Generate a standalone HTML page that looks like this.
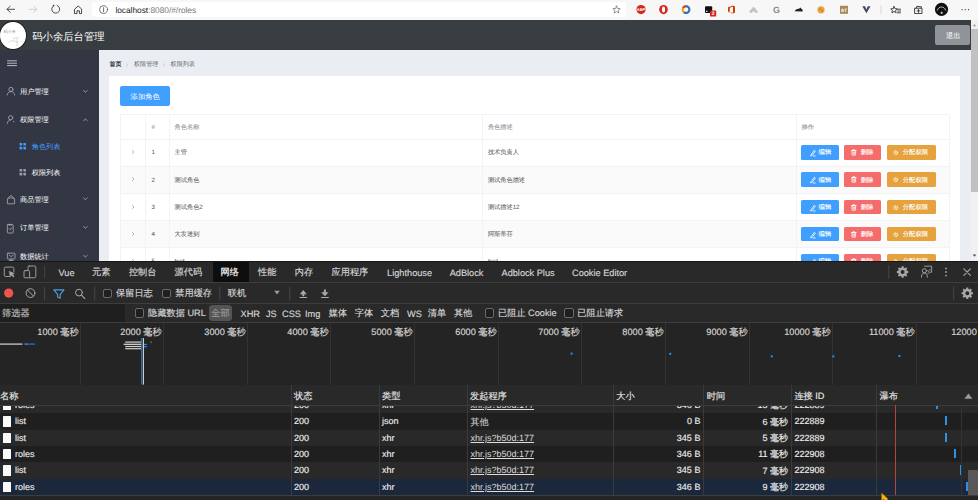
<!DOCTYPE html>
<html><head><meta charset="utf-8">
<style>
*{margin:0;padding:0;box-sizing:border-box}
html,body{width:978px;height:500px;overflow:hidden;background:#fff;font-family:"Liberation Sans",sans-serif;text-rendering:geometricPrecision}
.a{position:absolute}
.t{position:absolute;white-space:nowrap;line-height:1;transform-origin:0 0}
</style></head><body>
<div class="a" style="left:0;top:0;width:978px;height:20px;background:#f7f7f7"></div>
<div class="a" style="left:92.4px;top:2.2px;width:534px;height:15px;background:#fff;border-radius:4px 0 0 4px"></div>
<svg class="a" style="left:0;top:0" width="978" height="20" viewBox="0 0 978 20">
<g fill="none" stroke-linecap="round" stroke-linejoin="round">
  <path d="M7 9.3H14.6M10.2 6.3L7 9.3L10.2 12.3" stroke="#333" stroke-width="0.85"/>
  <path d="M29.2 9.3H36.8M33.6 6.3L36.8 9.3L33.6 12.3" stroke="#c8c8c8" stroke-width="0.85"/>
  <path d="M53.8 5.6A4 4 0 1 0 57.2 5.4" stroke="#333" stroke-width="0.85"/>
  <circle cx="53.6" cy="5.6" r="0.8" fill="#333" stroke="none"/>
  <path d="M74.8 9L78.2 6L81.6 9V13.6H79.4V10.8H77V13.6H74.8Z" stroke="#333" stroke-width="0.9"/>
  <circle cx="103.6" cy="9.6" r="4" stroke="#555" stroke-width="0.8"/>
  <path d="M103.6 8.6V11.8" stroke="#555" stroke-width="0.9"/>
  <path d="M616.5 6L617.6 8.5L620.2 8.7L618.2 10.4L618.8 13L616.5 11.6L614.2 13L614.8 10.4L612.8 8.7L615.4 8.5Z" stroke="#666" stroke-width="0.7"/>
  <line x1="881" y1="5.5" x2="881" y2="13.8" stroke="#d0d0d0" stroke-width="0.8"/>
  <path d="M894 6.5L895 8.7L897.3 8.9L895.6 10.4L896.1 12.7L894 11.5L891.9 12.7L892.4 10.4L890.7 8.9L893 8.7Z" stroke="#333" stroke-width="0.9"/>
  <path d="M897.5 9.2H900.5M897.8 11H900.5M897.3 12.8H900.5" stroke="#333" stroke-width="0.9"/>
  <path d="M915 8.2H922V13.5H915Z M916.2 8.2L916.8 6.3L921.5 6.8L921.2 8.2 M918.5 9.5V12.3M917.1 10.9H919.9" stroke="#333" stroke-width="0.9"/>
</g>
<circle cx="103.6" cy="7.3" r="0.5" fill="#555"/>
<circle cx="641" cy="9.6" r="4.6" fill="#d4271c"/>
<text x="641" y="11.2" font-size="4" fill="#fff" text-anchor="middle" font-family="Liberation Sans" font-weight="bold">ABP</text>
<ellipse cx="663.5" cy="9.6" rx="4.3" ry="4.6" fill="#d4271c"/>
<ellipse cx="663.5" cy="9.6" rx="1.6" ry="3" fill="#fff"/>
<circle cx="686" cy="9.6" r="3.4" fill="none" stroke="#e8a317" stroke-width="2"/>
<path d="M686 6.2A3.4 3.4 0 0 1 689.4 9.6" fill="none" stroke="#2a6fcf" stroke-width="2"/>
<path d="M689.4 9.6A3.4 3.4 0 0 1 684 12.4" fill="none" stroke="#2a6fcf" stroke-width="2"/>
<path d="M683 8A3.4 3.4 0 0 1 686 6.2" fill="none" stroke="#d9382c" stroke-width="2"/>
<rect x="705" y="6.2" width="7.2" height="6.8" rx="1" fill="#111"/>
<circle cx="706.8" cy="11.2" r="0.8" fill="#fff"/>
<rect x="710" y="10.6" width="6.2" height="5.8" rx="0.6" fill="#d8251d"/>
<text x="713.1" y="15.3" font-size="5" fill="#fff" text-anchor="middle" font-family="Liberation Sans" font-weight="bold">2</text>
<path d="M728 7.2L733 5.6L735 6.6V12.6L733 13.6L728 12.2L733 12.8V6.6L729.8 7.8V11.3L728 12.2Z" fill="#d83b01"/>
<path d="M749.4 11.6L752.6 7.4Q753.6 6.4 754.6 7.4L757.8 11.6Q758.2 12.6 757 12.8L755.2 12.8L753.6 10.8L752 12.8L750.2 12.8Q749 12.6 749.4 11.6Z" fill="#c2c2c2"/>
<text x="776.4" y="12.8" font-size="9" fill="#8a8a8a" text-anchor="middle" font-family="Liberation Sans" font-weight="bold">G</text>
<path d="M794.6 11.2C795.5 9.5 797 8.6 799 8.8L800.6 7.4L801.3 8.7C802.5 9.2 803 10.2 802.6 11.6Z" fill="#222"/>
<circle cx="821" cy="9.8" r="3.6" fill="#e8a33a"/>
<circle cx="820" cy="9" r="0.6" fill="#7a3d14"/><circle cx="822.2" cy="10.6" r="0.7" fill="#c0392b"/>
<rect x="840" y="5.8" width="8" height="8" fill="#a8875a"/>
<text x="844" y="12" font-size="4.6" fill="#fff" text-anchor="middle" font-family="Liberation Sans" font-weight="bold">ST</text>
<path d="M862.3 6.3H865L866.4 9.6L867.8 6.3H870.5L866.4 13.2Z" fill="#3e4a5a"/>
<circle cx="941.5" cy="9.4" r="6.6" fill="#111"/>
<path d="M937.2 10.5C938 8 939.8 7 941.5 7C943.2 7 945 8 945.8 10.5" fill="none" stroke="#fff" stroke-width="0.7"/>
<circle cx="941.7" cy="12.8" r="1.1" fill="#ccc"/>
<circle cx="962" cy="9.7" r="0.6" fill="#333"/><circle cx="965.3" cy="9.7" r="0.6" fill="#333"/><circle cx="968.6" cy="9.7" r="0.6" fill="#333"/>
</svg>
<div class="t" style="left:115.40px;top:6.00px;font-size:8.3px;color:#222;">localhost<span style="color:#777">:8080/#/roles</span></div>
<div class="a" style="left:0;top:20px;width:971px;height:30.4px;background:#373d41"></div>
<div class="a" style="left:-1px;top:20.6px;width:28px;height:29.6px;border-radius:50%;background:#fff;border:1.2px solid #1a1a1a"></div>
<div class="t" style="left:3.40px;top:30.00px;font-size:4.2px;color:#999;">码小余</div>
<svg class="a" style="left:0;top:20px" width="30" height="30"><path d="M8.5 22.5C11 20 15.5 20.5 18.5 23M13 18.5L19 17.5M17 19V26" fill="none" stroke="#c8c8c8" stroke-width="0.7"/></svg>
<div class="t" style="left:32.20px;top:33.00px;font-size:10.35px;color:#fff;">码小余后台管理</div>
<div class="a" style="left:935px;top:25px;width:35.4px;height:20.2px;background:#909399;border-radius:2px"></div>
<div class="t" style="left:946.00px;top:32.00px;font-size:7.25px;color:#fff;">退出</div>
<div class="a" style="left:0;top:50.4px;width:99px;height:211px;background:#333744"></div>
<svg class="a" style="left:0;top:50px" width="99" height="211" viewBox="0 0 99 211">
<g fill="none" stroke="#c8cbd2" stroke-width="0.9" stroke-linecap="round">
  <path d="M7.5 10.8H16.5M7.5 13.2H16.5M7.5 15.6H16.5"/>
</g>
<g fill="none" stroke="#a9adb5" stroke-width="0.8" stroke-linecap="round" stroke-linejoin="round">
  <circle cx="11" cy="39.4" r="2.1"/>
  <path d="M7.3 45C7.6 42.6 9 41.6 11 41.6C13 41.6 14.4 42.6 14.7 45"/>
  <circle cx="10.6" cy="67.8" r="2.1"/>
  <path d="M7.3 73.4C7.6 71 9 70 10.6 70M13.2 71.2L14.2 72.2"/>
  <path d="M83.6 40.6L85.4 42.2L87.2 40.6"/>
  <path d="M83.6 70.6L85.4 69L87.2 70.6"/>
  <path d="M83.6 148L85.4 149.6L87.2 148"/>
  <path d="M83.6 176.6L85.4 178.2L87.2 176.6"/>
  <path d="M83.6 205.4L85.4 207L87.2 205.4"/>
  <path d="M7.4 153.4V148.6L11 145.4L14.6 148.6V153.4Z"/><path d="M8.6 148.4Q11 146.6 13.4 148.4"/>
  <rect x="7.4" y="174.6" width="5.8" height="8.4" rx="0.6"/>
  <path d="M9.4 174.2V175.4M11.2 174.2V175.4M9 178.6L10.2 179.8L11.8 177.6"/>
  <rect x="7.4" y="203.2" width="7.6" height="5.8" rx="0.6"/>
  <path d="M9.2 210.6H13.2M11.2 209V210.6M9.2 205.2L11.2 206.6L13.2 205.2"/>
</g>
<g fill="#409eff">
  <rect x="19.6" y="93" width="2.6" height="2.6" rx="0.4"/><rect x="23.4" y="93" width="2.6" height="2.6" rx="0.4"/>
  <rect x="19.6" y="96.8" width="2.6" height="2.6" rx="0.4"/><rect x="23.4" y="96.8" width="2.6" height="2.6" rx="0.4"/>
</g>
<g fill="#9a9ea7">
  <rect x="19.6" y="119" width="2.6" height="2.6" rx="0.4"/><rect x="23.4" y="119" width="2.6" height="2.6" rx="0.4"/>
  <rect x="19.6" y="122.8" width="2.6" height="2.6" rx="0.4"/><rect x="23.4" y="122.8" width="2.6" height="2.6" rx="0.4"/>
</g>
</svg>
<div class="t" style="left:20.00px;top:88.00px;font-size:7.2px;color:#fff;">用户管理</div>
<div class="t" style="left:20.00px;top:116.00px;font-size:7.2px;color:#fff;">权限管理</div>
<div class="t" style="left:31.70px;top:143.00px;font-size:7.2px;color:#409eff;">角色列表</div>
<div class="t" style="left:31.70px;top:169.00px;font-size:7.2px;color:#fff;">权限列表</div>
<div class="t" style="left:20.00px;top:196.00px;font-size:7.2px;color:#fff;">商品管理</div>
<div class="t" style="left:20.00px;top:224.00px;font-size:7.2px;color:#fff;">订单管理</div>
<div class="t" style="left:20.00px;top:253.00px;font-size:7.2px;color:#fff;">数据统计</div>
<div class="a" style="left:99px;top:50.4px;width:872px;height:211px;background:#eaedf1"></div>
<div class="t" style="left:109.40px;top:62.00px;font-size:6.1px;color:#303133;font-weight:bold">首页</div>
<div class="t" style="left:134.00px;top:62.00px;font-size:6.1px;color:#606266;">权限管理</div>
<div class="t" style="left:170.60px;top:62.00px;font-size:6.1px;color:#606266;">权限列表</div>
<svg class="a" style="left:99px;top:50px" width="100" height="30"><path d="M27 13.2L28.8 15L27 16.8M63.8 13.2L65.6 15L63.8 16.8" fill="none" stroke="#c0c4cc" stroke-width="0.7"/></svg>
<div class="a" style="left:109px;top:75.8px;width:851.4px;height:200px;background:#fff"></div>
<div class="a" style="left:120px;top:86px;width:50.4px;height:20.4px;background:#409eff;border-radius:2px"></div>
<div class="t" style="left:130.60px;top:93.00px;font-size:7.3px;color:#fff;">添加角色</div>
<div class="a" style="left:971px;top:20px;width:7px;height:241px;background:#f1f1f1"></div>
<div class="a" style="left:971px;top:28.6px;width:7px;height:163px;background:#c1c1c1"></div>
<svg class="a" style="left:971px;top:20px" width="7" height="241"><path d="M1.6 6.2L3.5 4L5.4 6.2Z" fill="#a3a3a3"/><path d="M1.6 234.6L3.5 236.8L5.4 234.6Z" fill="#505050"/></svg>
<div class="a" style="left:120px;top:165.8px;width:829.3px;height:27.2px;background:#fafafa"></div>
<div class="a" style="left:120px;top:220.2px;width:829.3px;height:27.2px;background:#fafafa"></div>
<div class="a" style="left:120px;top:114.2px;width:829.3px;height:0.7px;background:#f1f3f6"></div>
<div class="a" style="left:120px;top:138.6px;width:829.3px;height:0.7px;background:#f1f3f6"></div>
<div class="a" style="left:120px;top:165.8px;width:829.3px;height:0.7px;background:#f1f3f6"></div>
<div class="a" style="left:120px;top:193.0px;width:829.3px;height:0.7px;background:#f1f3f6"></div>
<div class="a" style="left:120px;top:220.2px;width:829.3px;height:0.7px;background:#f1f3f6"></div>
<div class="a" style="left:120px;top:247.4px;width:829.3px;height:0.7px;background:#f1f3f6"></div>
<div class="a" style="left:120px;top:114.2px;width:0.6px;height:150px;background:#f1f3f6"></div>
<div class="a" style="left:144.6px;top:114.2px;width:0.6px;height:150px;background:#f1f3f6"></div>
<div class="a" style="left:169.4px;top:114.2px;width:0.6px;height:150px;background:#f1f3f6"></div>
<div class="a" style="left:482.2px;top:114.2px;width:0.6px;height:150px;background:#f1f3f6"></div>
<div class="a" style="left:795.6px;top:114.2px;width:0.6px;height:150px;background:#f1f3f6"></div>
<div class="a" style="left:949px;top:114.2px;width:0.6px;height:150px;background:#f1f3f6"></div>
<div class="t" style="left:151.60px;top:125.00px;font-size:6.2px;color:#909399;-webkit-text-stroke:0.08px #909399;">#</div>
<div class="t" style="left:174.60px;top:125.00px;font-size:6.2px;color:#909399;-webkit-text-stroke:0.08px #909399;">角色名称</div>
<div class="t" style="left:487.90px;top:125.00px;font-size:6.2px;color:#909399;-webkit-text-stroke:0.08px #909399;">角色描述</div>
<div class="t" style="left:801.50px;top:125.00px;font-size:6.2px;color:#909399;-webkit-text-stroke:0.08px #909399;">操作</div>
<svg class="a" style="left:130px;top:148.2px" width="6" height="8"><path d="M2.2 2.2L4 4L2.2 5.8" fill="none" stroke="#909399" stroke-width="0.7"/></svg>
<div class="t" style="left:151.40px;top:150.00px;font-size:6.2px;color:#606266;-webkit-text-stroke:0.06px #606266;">1</div>
<div class="t" style="left:174.60px;top:150.00px;font-size:6.2px;color:#606266;-webkit-text-stroke:0.06px #606266;">主管</div>
<div class="t" style="left:487.90px;top:150.00px;font-size:6.2px;color:#606266;-webkit-text-stroke:0.06px #606266;">技术负责人</div>
<div class="a" style="left:801.2px;top:145.1px;width:37.5px;height:14.6px;background:#409eff;border-radius:1.5px"></div>
<div class="a" style="left:844.2px;top:145.1px;width:36.8px;height:14.6px;background:#f56c6c;border-radius:1.5px"></div>
<div class="a" style="left:886.6px;top:145.1px;width:49px;height:14.6px;background:#e6a23c;border-radius:1.5px"></div>
<svg class="a" style="left:801px;top:145.1px" width="136" height="15" viewBox="0 0 136 15"><g fill="none" stroke="#fff" stroke-width="0.8" stroke-linecap="round" stroke-linejoin="round"><path d="M10.2 9.6L13.4 5.2L14.4 6.1L11.2 10.4L9.9 10.7Z M12.2 11H14.3"/><rect x="51" y="5.6" width="3.6" height="4.6" rx="0.3"/><path d="M50.4 5.6H55.2M52.1 4.7H53.5M52.2 7V9M53.4 7V9"/></g><circle cx="94.8" cy="7.6" r="1.8" fill="none" stroke="#fff" stroke-width="1.1" stroke-dasharray="0.9 0.5"/><circle cx="94.8" cy="7.6" r="0.6" fill="#fff"/></svg>
<div class="t" style="left:818.60px;top:150.00px;font-size:6.3px;color:#fff;-webkit-text-stroke:0.12px #fff;">编辑</div>
<div class="t" style="left:860.70px;top:150.00px;font-size:6.3px;color:#fff;-webkit-text-stroke:0.12px #fff;">删除</div>
<div class="t" style="left:902.80px;top:150.00px;font-size:6.3px;color:#fff;-webkit-text-stroke:0.12px #fff;">分配权限</div>
<svg class="a" style="left:130px;top:175.4px" width="6" height="8"><path d="M2.2 2.2L4 4L2.2 5.8" fill="none" stroke="#909399" stroke-width="0.7"/></svg>
<div class="t" style="left:151.40px;top:178.00px;font-size:6.2px;color:#606266;-webkit-text-stroke:0.06px #606266;">2</div>
<div class="t" style="left:174.60px;top:178.00px;font-size:6.2px;color:#606266;-webkit-text-stroke:0.06px #606266;">测试角色</div>
<div class="t" style="left:487.90px;top:178.00px;font-size:6.2px;color:#606266;-webkit-text-stroke:0.06px #606266;">测试角色描述</div>
<div class="a" style="left:801.2px;top:172.3px;width:37.5px;height:14.6px;background:#409eff;border-radius:1.5px"></div>
<div class="a" style="left:844.2px;top:172.3px;width:36.8px;height:14.6px;background:#f56c6c;border-radius:1.5px"></div>
<div class="a" style="left:886.6px;top:172.3px;width:49px;height:14.6px;background:#e6a23c;border-radius:1.5px"></div>
<svg class="a" style="left:801px;top:172.3px" width="136" height="15" viewBox="0 0 136 15"><g fill="none" stroke="#fff" stroke-width="0.8" stroke-linecap="round" stroke-linejoin="round"><path d="M10.2 9.6L13.4 5.2L14.4 6.1L11.2 10.4L9.9 10.7Z M12.2 11H14.3"/><rect x="51" y="5.6" width="3.6" height="4.6" rx="0.3"/><path d="M50.4 5.6H55.2M52.1 4.7H53.5M52.2 7V9M53.4 7V9"/></g><circle cx="94.8" cy="7.6" r="1.8" fill="none" stroke="#fff" stroke-width="1.1" stroke-dasharray="0.9 0.5"/><circle cx="94.8" cy="7.6" r="0.6" fill="#fff"/></svg>
<div class="t" style="left:818.60px;top:178.00px;font-size:6.3px;color:#fff;-webkit-text-stroke:0.12px #fff;">编辑</div>
<div class="t" style="left:860.70px;top:178.00px;font-size:6.3px;color:#fff;-webkit-text-stroke:0.12px #fff;">删除</div>
<div class="t" style="left:902.80px;top:178.00px;font-size:6.3px;color:#fff;-webkit-text-stroke:0.12px #fff;">分配权限</div>
<svg class="a" style="left:130px;top:202.6px" width="6" height="8"><path d="M2.2 2.2L4 4L2.2 5.8" fill="none" stroke="#909399" stroke-width="0.7"/></svg>
<div class="t" style="left:151.40px;top:205.00px;font-size:6.2px;color:#606266;-webkit-text-stroke:0.06px #606266;">3</div>
<div class="t" style="left:174.60px;top:205.00px;font-size:6.2px;color:#606266;-webkit-text-stroke:0.06px #606266;">测试角色2</div>
<div class="t" style="left:487.90px;top:205.00px;font-size:6.2px;color:#606266;-webkit-text-stroke:0.06px #606266;">测试描述12</div>
<div class="a" style="left:801.2px;top:199.5px;width:37.5px;height:14.6px;background:#409eff;border-radius:1.5px"></div>
<div class="a" style="left:844.2px;top:199.5px;width:36.8px;height:14.6px;background:#f56c6c;border-radius:1.5px"></div>
<div class="a" style="left:886.6px;top:199.5px;width:49px;height:14.6px;background:#e6a23c;border-radius:1.5px"></div>
<svg class="a" style="left:801px;top:199.5px" width="136" height="15" viewBox="0 0 136 15"><g fill="none" stroke="#fff" stroke-width="0.8" stroke-linecap="round" stroke-linejoin="round"><path d="M10.2 9.6L13.4 5.2L14.4 6.1L11.2 10.4L9.9 10.7Z M12.2 11H14.3"/><rect x="51" y="5.6" width="3.6" height="4.6" rx="0.3"/><path d="M50.4 5.6H55.2M52.1 4.7H53.5M52.2 7V9M53.4 7V9"/></g><circle cx="94.8" cy="7.6" r="1.8" fill="none" stroke="#fff" stroke-width="1.1" stroke-dasharray="0.9 0.5"/><circle cx="94.8" cy="7.6" r="0.6" fill="#fff"/></svg>
<div class="t" style="left:818.60px;top:205.00px;font-size:6.3px;color:#fff;-webkit-text-stroke:0.12px #fff;">编辑</div>
<div class="t" style="left:860.70px;top:205.00px;font-size:6.3px;color:#fff;-webkit-text-stroke:0.12px #fff;">删除</div>
<div class="t" style="left:902.80px;top:205.00px;font-size:6.3px;color:#fff;-webkit-text-stroke:0.12px #fff;">分配权限</div>
<svg class="a" style="left:130px;top:229.8px" width="6" height="8"><path d="M2.2 2.2L4 4L2.2 5.8" fill="none" stroke="#909399" stroke-width="0.7"/></svg>
<div class="t" style="left:151.40px;top:232.00px;font-size:6.2px;color:#606266;-webkit-text-stroke:0.06px #606266;">4</div>
<div class="t" style="left:174.60px;top:232.00px;font-size:6.2px;color:#606266;-webkit-text-stroke:0.06px #606266;">大发送到</div>
<div class="t" style="left:487.90px;top:232.00px;font-size:6.2px;color:#606266;-webkit-text-stroke:0.06px #606266;">阿斯蒂芬</div>
<div class="a" style="left:801.2px;top:226.7px;width:37.5px;height:14.6px;background:#409eff;border-radius:1.5px"></div>
<div class="a" style="left:844.2px;top:226.7px;width:36.8px;height:14.6px;background:#f56c6c;border-radius:1.5px"></div>
<div class="a" style="left:886.6px;top:226.7px;width:49px;height:14.6px;background:#e6a23c;border-radius:1.5px"></div>
<svg class="a" style="left:801px;top:226.7px" width="136" height="15" viewBox="0 0 136 15"><g fill="none" stroke="#fff" stroke-width="0.8" stroke-linecap="round" stroke-linejoin="round"><path d="M10.2 9.6L13.4 5.2L14.4 6.1L11.2 10.4L9.9 10.7Z M12.2 11H14.3"/><rect x="51" y="5.6" width="3.6" height="4.6" rx="0.3"/><path d="M50.4 5.6H55.2M52.1 4.7H53.5M52.2 7V9M53.4 7V9"/></g><circle cx="94.8" cy="7.6" r="1.8" fill="none" stroke="#fff" stroke-width="1.1" stroke-dasharray="0.9 0.5"/><circle cx="94.8" cy="7.6" r="0.6" fill="#fff"/></svg>
<div class="t" style="left:818.60px;top:232.00px;font-size:6.3px;color:#fff;-webkit-text-stroke:0.12px #fff;">编辑</div>
<div class="t" style="left:860.70px;top:232.00px;font-size:6.3px;color:#fff;-webkit-text-stroke:0.12px #fff;">删除</div>
<div class="t" style="left:902.80px;top:232.00px;font-size:6.3px;color:#fff;-webkit-text-stroke:0.12px #fff;">分配权限</div>
<svg class="a" style="left:130px;top:257.0px" width="6" height="8"><path d="M2.2 2.2L4 4L2.2 5.8" fill="none" stroke="#909399" stroke-width="0.7"/></svg>
<div class="t" style="left:151.40px;top:259.00px;font-size:6.2px;color:#606266;-webkit-text-stroke:0.06px #606266;">5</div>
<div class="t" style="left:174.60px;top:259.00px;font-size:6.2px;color:#606266;-webkit-text-stroke:0.06px #606266;">test</div>
<div class="t" style="left:487.90px;top:259.00px;font-size:6.2px;color:#606266;-webkit-text-stroke:0.06px #606266;">test</div>
<div class="a" style="left:801.2px;top:253.9px;width:37.5px;height:14.6px;background:#409eff;border-radius:1.5px"></div>
<div class="a" style="left:844.2px;top:253.9px;width:36.8px;height:14.6px;background:#f56c6c;border-radius:1.5px"></div>
<div class="a" style="left:886.6px;top:253.9px;width:49px;height:14.6px;background:#e6a23c;border-radius:1.5px"></div>
<svg class="a" style="left:801px;top:253.9px" width="136" height="15" viewBox="0 0 136 15"><g fill="none" stroke="#fff" stroke-width="0.8" stroke-linecap="round" stroke-linejoin="round"><path d="M10.2 9.6L13.4 5.2L14.4 6.1L11.2 10.4L9.9 10.7Z M12.2 11H14.3"/><rect x="51" y="5.6" width="3.6" height="4.6" rx="0.3"/><path d="M50.4 5.6H55.2M52.1 4.7H53.5M52.2 7V9M53.4 7V9"/></g><circle cx="94.8" cy="7.6" r="1.8" fill="none" stroke="#fff" stroke-width="1.1" stroke-dasharray="0.9 0.5"/><circle cx="94.8" cy="7.6" r="0.6" fill="#fff"/></svg>
<div class="t" style="left:818.60px;top:259.00px;font-size:6.3px;color:#fff;-webkit-text-stroke:0.12px #fff;">编辑</div>
<div class="t" style="left:860.70px;top:259.00px;font-size:6.3px;color:#fff;-webkit-text-stroke:0.12px #fff;">删除</div>
<div class="t" style="left:902.80px;top:259.00px;font-size:6.3px;color:#fff;-webkit-text-stroke:0.12px #fff;">分配权限</div>
<div class="a" style="left:0;top:261px;width:978px;height:239px;background:#242424"></div>
<div class="a" style="left:0;top:261px;width:978px;height:21px;background:#292929"></div>
<div class="a" style="left:212.5px;top:261.8px;width:36.5px;height:20px;background:#0e0e0e"></div>
<div class="a" style="left:0;top:261px;width:978px;height:1px;background:#161616"></div>
<div class="a" style="left:0;top:281.8px;width:978px;height:0.8px;background:#3d3d3d"></div>
<div class="a" style="left:0;top:282.6px;width:978px;height:20.4px;background:#292929"></div>
<div class="a" style="left:0;top:302.8px;width:978px;height:0.8px;background:#3d3d3d"></div>
<div class="a" style="left:0;top:303.6px;width:978px;height:18.6px;background:#292929"></div>
<div class="a" style="left:0;top:303.6px;width:124.8px;height:18.4px;background:#1f1f1f"></div>
<div class="a" style="left:0;top:322px;width:978px;height:0.8px;background:#3d3d3d"></div>
<div class="a" style="left:0;top:384.6px;width:978px;height:0.8px;background:#3d3d3d"></div>
<div class="t" style="left:58.50px;top:269.00px;font-size:9.2px;color:#d6d6d6;-webkit-text-stroke:0.15px #d6d6d6;">Vue</div>
<div class="t" style="left:92.00px;top:268.00px;font-size:9.2px;color:#d6d6d6;-webkit-text-stroke:0.15px #d6d6d6;">元素</div>
<div class="t" style="left:128.90px;top:268.00px;font-size:9.2px;color:#d6d6d6;-webkit-text-stroke:0.15px #d6d6d6;">控制台</div>
<div class="t" style="left:174.60px;top:268.00px;font-size:9.2px;color:#d6d6d6;-webkit-text-stroke:0.15px #d6d6d6;">源代码</div>
<div class="t" style="left:220.60px;top:268.00px;font-size:9.2px;color:#ffffff;-webkit-text-stroke:0.15px #ffffff;">网络</div>
<div class="t" style="left:258.00px;top:268.00px;font-size:9.2px;color:#d6d6d6;-webkit-text-stroke:0.15px #d6d6d6;">性能</div>
<div class="t" style="left:294.80px;top:268.00px;font-size:9.2px;color:#d6d6d6;-webkit-text-stroke:0.15px #d6d6d6;">内存</div>
<div class="t" style="left:331.50px;top:268.00px;font-size:9.2px;color:#d6d6d6;-webkit-text-stroke:0.15px #d6d6d6;">应用程序</div>
<div class="t" style="left:387.10px;top:269.00px;font-size:9.2px;color:#d6d6d6;-webkit-text-stroke:0.15px #d6d6d6;">Lighthouse</div>
<div class="t" style="left:449.70px;top:269.00px;font-size:9.2px;color:#d6d6d6;-webkit-text-stroke:0.15px #d6d6d6;">AdBlock</div>
<div class="t" style="left:501.50px;top:269.00px;font-size:9.2px;color:#d6d6d6;-webkit-text-stroke:0.15px #d6d6d6;">Adblock Plus</div>
<div class="t" style="left:572.00px;top:269.00px;font-size:9.2px;color:#d6d6d6;-webkit-text-stroke:0.15px #d6d6d6;">Cookie Editor</div>
<svg class="a" style="left:0;top:261px" width="978" height="62" viewBox="0 261 978 62">
<g fill="none" stroke="#a8a8a8" stroke-width="0.9" stroke-linecap="round" stroke-linejoin="round">
 <path d="M9.5 276.5H5.6Q4.3 276.5 4.3 275.2V268.4Q4.3 267.1 5.6 267.1H12.6Q13.9 267.1 13.9 268.4V271.5"/>
 <path d="M9.4 271.4L14.4 273.3L12.4 274.1L14.2 276.3L13.2 277.1L11.4 274.9L10.3 276.6Z" fill="#a8a8a8" stroke-width="0.5"/>
 <rect x="28" y="266" width="7.8" height="11.8" rx="1.2"/>
 <rect x="24" y="270.6" width="5.6" height="7.2" rx="1" fill="#292929"/>
 <path d="M44.6 266V277.8" stroke="#4a4a4a"/>
 <path d="M888.7 265.5V278.5" stroke="#4a4a4a"/>
 <path d="M44.6 287V300" stroke="#4a4a4a"/>
 <path d="M94.7 287V300" stroke="#4a4a4a"/>
 <path d="M219.8 287V300" stroke="#4a4a4a"/>
 <path d="M289.8 287V300" stroke="#4a4a4a"/>
 <path d="M953.7 286.5V299.5" stroke="#4a4a4a"/>
 <circle cx="30.5" cy="293.1" r="4.4" stroke="#a8a8a8" stroke-width="1"/>
 <path d="M27.4 290L33.6 296.2" stroke-width="1"/>
 <path d="M53.8 289.9H64L60.2 294.4V298.2L57.6 297V294.4Z" stroke="#4d9de0" stroke-width="1.1"/>
 <circle cx="79" cy="292.6" r="3.4" stroke-width="1"/>
 <path d="M81.5 295.2L84.8 298.6" stroke-width="1.1"/>
 <path d="M921.4 277.2C921.4 274.6 922.6 273 924.4 273C926.2 273 927.4 274.6 927.4 277.2" stroke-width="0.9"/>
 <circle cx="924.4" cy="270.8" r="2.1"/>
 <path d="M924.6 266.2H931.6V272.2H929.4L927.6 274" stroke-width="0.9"/>
 <path d="M927.4 270.6L928.4 271.6L930.2 269.2" stroke-width="0.8"/>
 <path d="M963.8 268.8L970.4 275.4M970.4 268.8L963.8 275.4" stroke-width="1.1"/>

</g>
<circle cx="8.7" cy="293.1" r="4.6" fill="#f0544c"/><path d="M299.8 294.2L303.3 290L306.8 294.2H304.3V296.2H302.3V294.2Z M323.9 289.6H325.9V292.2H328.6L324.9 296.2L321.2 292.2H323.9Z" fill="#a8a8a8"/><rect x="299.6" y="297" width="7.4" height="1" fill="#a8a8a8"/><rect x="321" y="297" width="7.8" height="1" fill="#a8a8a8"/>
<circle cx="946" cy="268.4" r="0.9" fill="#a8a8a8"/><circle cx="946" cy="272" r="0.9" fill="#a8a8a8"/><circle cx="946" cy="275.6" r="0.9" fill="#a8a8a8"/>
<path d="M274.2 290.8H279.8L277 294.6Z" fill="#9a9a9a"/>
<path d="M906.99 271.01 L908.31 270.98 L908.31 273.02 L906.99 272.99 L906.40 274.41 L907.36 275.32 L905.92 276.76 L905.01 275.80 L903.59 276.39 L903.62 277.71 L901.58 277.71 L901.61 276.39 L900.19 275.80 L899.28 276.76 L897.84 275.32 L898.80 274.41 L898.21 272.99 L896.89 273.02 L896.89 270.98 L898.21 271.01 L898.80 269.59 L897.84 268.68 L899.28 267.24 L900.19 268.20 L901.61 267.61 L901.58 266.29 L903.62 266.29 L903.59 267.61 L905.01 268.20 L905.92 267.24 L907.36 268.68 L906.40 269.59Z M904.60 272.00 A2.0 2.0 0 1 0 900.60 272.00 A2.0 2.0 0 1 0 904.60 272.00Z" fill="#a8a8a8" fill-rule="evenodd"/>
<path d="M971.69 292.21 L973.01 292.18 L973.01 294.22 L971.69 294.19 L971.10 295.61 L972.06 296.52 L970.62 297.96 L969.71 297.00 L968.29 297.59 L968.32 298.91 L966.28 298.91 L966.31 297.59 L964.89 297.00 L963.98 297.96 L962.54 296.52 L963.50 295.61 L962.91 294.19 L961.59 294.22 L961.59 292.18 L962.91 292.21 L963.50 290.79 L962.54 289.88 L963.98 288.44 L964.89 289.40 L966.31 288.81 L966.28 287.49 L968.32 287.49 L968.29 288.81 L969.71 289.40 L970.62 288.44 L972.06 289.88 L971.10 290.79Z M969.30 293.20 A2.0 2.0 0 1 0 965.30 293.20 A2.0 2.0 0 1 0 969.30 293.20Z" fill="#a8a8a8" fill-rule="evenodd"/>
</svg>
<div class="a" style="left:102.5px;top:288.8px;width:9.2px;height:9.6px;border:0.9px solid #6b6b6b;border-radius:2px;background:#1f1f1f"></div>
<div class="a" style="left:161.7px;top:288.8px;width:9.2px;height:9.6px;border:0.9px solid #6b6b6b;border-radius:2px;background:#1f1f1f"></div>
<div class="a" style="left:134.5px;top:308.3px;width:9.2px;height:9.6px;border:0.9px solid #6b6b6b;border-radius:2px;background:#1f1f1f"></div>
<div class="a" style="left:484.5px;top:308.3px;width:9.2px;height:9.6px;border:0.9px solid #6b6b6b;border-radius:2px;background:#1f1f1f"></div>
<div class="a" style="left:564.4px;top:308.3px;width:9.2px;height:9.6px;border:0.9px solid #6b6b6b;border-radius:2px;background:#1f1f1f"></div>
<div class="t" style="left:116.00px;top:289.00px;font-size:9.2px;color:#d6d6d6;-webkit-text-stroke:0.15px #d6d6d6;">保留日志</div>
<div class="t" style="left:175.30px;top:289.00px;font-size:9.2px;color:#d6d6d6;-webkit-text-stroke:0.15px #d6d6d6;">禁用缓存</div>
<div class="t" style="left:227.80px;top:289.00px;font-size:9.2px;color:#d6d6d6;-webkit-text-stroke:0.15px #d6d6d6;">联机</div>
<div class="t" style="left:2.00px;top:309.00px;font-size:9.2px;color:#bdbdbd;-webkit-text-stroke:0.15px #bdbdbd;">筛选器</div>
<div class="t" style="left:148.10px;top:309.00px;font-size:9.2px;color:#d6d6d6;-webkit-text-stroke:0.15px #d6d6d6;">隐藏数据 URL</div>
<div class="a" style="left:208.9px;top:305.3px;width:23.1px;height:16px;background:#545454;border-radius:3.5px"></div>
<div class="t" style="left:211.20px;top:309.00px;font-size:9.2px;color:#9a9a9a;-webkit-text-stroke:0.15px #9a9a9a;">全部</div>
<div class="t" style="left:240.60px;top:310.00px;font-size:9.2px;color:#d6d6d6;-webkit-text-stroke:0.15px #d6d6d6;">XHR</div>
<div class="t" style="left:266.00px;top:310.00px;font-size:9.2px;color:#d6d6d6;-webkit-text-stroke:0.15px #d6d6d6;">JS</div>
<div class="t" style="left:282.00px;top:310.00px;font-size:9.2px;color:#d6d6d6;-webkit-text-stroke:0.15px #d6d6d6;">CSS</div>
<div class="t" style="left:305.00px;top:310.00px;font-size:9.2px;color:#d6d6d6;-webkit-text-stroke:0.15px #d6d6d6;">Img</div>
<div class="t" style="left:328.70px;top:309.00px;font-size:9.2px;color:#d6d6d6;-webkit-text-stroke:0.15px #d6d6d6;">媒体</div>
<div class="t" style="left:354.80px;top:309.00px;font-size:9.2px;color:#d6d6d6;-webkit-text-stroke:0.15px #d6d6d6;">字体</div>
<div class="t" style="left:380.80px;top:309.00px;font-size:9.2px;color:#d6d6d6;-webkit-text-stroke:0.15px #d6d6d6;">文档</div>
<div class="t" style="left:407.00px;top:310.00px;font-size:9.2px;color:#d6d6d6;-webkit-text-stroke:0.15px #d6d6d6;">WS</div>
<div class="t" style="left:427.80px;top:309.00px;font-size:9.2px;color:#d6d6d6;-webkit-text-stroke:0.15px #d6d6d6;">清单</div>
<div class="t" style="left:453.90px;top:309.00px;font-size:9.2px;color:#d6d6d6;-webkit-text-stroke:0.15px #d6d6d6;">其他</div>
<div class="t" style="left:498.00px;top:309.00px;font-size:9.2px;color:#d6d6d6;-webkit-text-stroke:0.15px #d6d6d6;">已阻止 Cookie</div>
<div class="t" style="left:577.30px;top:309.00px;font-size:9.2px;color:#d6d6d6;-webkit-text-stroke:0.15px #d6d6d6;">已阻止请求</div>
<div class="a" style="left:80px;top:322.8px;width:1px;height:62px;background:#333"></div>
<div class="t" style="left:-41.30px;top:328.00px;font-size:9.2px;color:#d6d6d6;width:120px;text-align:right;-webkit-text-stroke:0.15px #d6d6d6;">1000 毫秒</div>
<div class="a" style="left:163px;top:322.8px;width:1px;height:62px;background:#333"></div>
<div class="t" style="left:41.70px;top:328.00px;font-size:9.2px;color:#d6d6d6;width:120px;text-align:right;-webkit-text-stroke:0.15px #d6d6d6;">2000 毫秒</div>
<div class="a" style="left:247px;top:322.8px;width:1px;height:62px;background:#333"></div>
<div class="t" style="left:125.70px;top:328.00px;font-size:9.2px;color:#d6d6d6;width:120px;text-align:right;-webkit-text-stroke:0.15px #d6d6d6;">3000 毫秒</div>
<div class="a" style="left:330px;top:322.8px;width:1px;height:62px;background:#333"></div>
<div class="t" style="left:208.70px;top:328.00px;font-size:9.2px;color:#d6d6d6;width:120px;text-align:right;-webkit-text-stroke:0.15px #d6d6d6;">4000 毫秒</div>
<div class="a" style="left:414px;top:322.8px;width:1px;height:62px;background:#333"></div>
<div class="t" style="left:292.70px;top:328.00px;font-size:9.2px;color:#d6d6d6;width:120px;text-align:right;-webkit-text-stroke:0.15px #d6d6d6;">5000 毫秒</div>
<div class="a" style="left:498px;top:322.8px;width:1px;height:62px;background:#333"></div>
<div class="t" style="left:376.70px;top:328.00px;font-size:9.2px;color:#d6d6d6;width:120px;text-align:right;-webkit-text-stroke:0.15px #d6d6d6;">6000 毫秒</div>
<div class="a" style="left:581px;top:322.8px;width:1px;height:62px;background:#333"></div>
<div class="t" style="left:459.70px;top:328.00px;font-size:9.2px;color:#d6d6d6;width:120px;text-align:right;-webkit-text-stroke:0.15px #d6d6d6;">7000 毫秒</div>
<div class="a" style="left:665px;top:322.8px;width:1px;height:62px;background:#333"></div>
<div class="t" style="left:543.70px;top:328.00px;font-size:9.2px;color:#d6d6d6;width:120px;text-align:right;-webkit-text-stroke:0.15px #d6d6d6;">8000 毫秒</div>
<div class="a" style="left:749px;top:322.8px;width:1px;height:62px;background:#333"></div>
<div class="t" style="left:627.70px;top:328.00px;font-size:9.2px;color:#d6d6d6;width:120px;text-align:right;-webkit-text-stroke:0.15px #d6d6d6;">9000 毫秒</div>
<div class="a" style="left:832px;top:322.8px;width:1px;height:62px;background:#333"></div>
<div class="t" style="left:710.70px;top:328.00px;font-size:9.2px;color:#d6d6d6;width:120px;text-align:right;-webkit-text-stroke:0.15px #d6d6d6;">10000 毫秒</div>
<div class="a" style="left:916px;top:322.8px;width:1px;height:62px;background:#333"></div>
<div class="t" style="left:794.70px;top:328.00px;font-size:9.2px;color:#d6d6d6;width:120px;text-align:right;-webkit-text-stroke:0.15px #d6d6d6;">11000 毫秒</div>
<div class="t" style="left:877.70px;top:328.00px;font-size:9.2px;color:#d6d6d6;width:120px;text-align:right;-webkit-text-stroke:0.15px #d6d6d6;">12000 毫秒</div>
<svg class="a" style="left:0;top:322px" width="978" height="63" viewBox="0 322 978 63">
<rect x="0" y="343.4" width="22.5" height="1.4" fill="#bcbcbc"/>
<rect x="24.5" y="343.4" width="4" height="1.4" fill="#3d8ad8"/>
<rect x="29" y="343.4" width="6" height="1.4" fill="#1a6fc4"/>
<rect x="125.2" y="341.5" width="15.8" height="1.2" fill="#cfcfcf"/>
<rect x="123.6" y="343.7" width="17.4" height="1.2" fill="#dedede"/>
<rect x="125.2" y="345.9" width="15.8" height="1.2" fill="#cfcfcf"/>
<rect x="125.2" y="348.1" width="15.8" height="1.2" fill="#cfcfcf"/>
<rect x="142.4" y="343.9" width="4.4" height="1.2" fill="#2a8ff0"/>
<rect x="142.4" y="346.1" width="4.4" height="1.2" fill="#2a8ff0"/>
<rect x="141.2" y="338" width="1.3" height="46.6" fill="#2e7fd0"/>
<rect x="143" y="338" width="1" height="46.6" fill="#e6c9a8"/>
<rect x="150.6" y="341.6" width="1" height="1" fill="#bbb"/>
<rect x="570.6" y="352.6" width="2" height="2" fill="#2a8ff0"/>
<rect x="669.2" y="352.8" width="2" height="2" fill="#2a8ff0"/>
<rect x="770.8" y="355.4" width="2" height="2" fill="#2a8ff0"/>
<rect x="832.4" y="355.4" width="2" height="2" fill="#2a8ff0"/>
<rect x="898.4" y="355" width="2" height="2" fill="#2a8ff0"/>
</svg>
<div class="a" style="left:0;top:397.05px;width:978px;height:16.40px;background:#292929"></div>
<div class="a" style="left:0;top:413.40px;width:978px;height:16.40px;background:#1f1f1f"></div>
<div class="a" style="left:0;top:429.75px;width:978px;height:16.40px;background:#292929"></div>
<div class="a" style="left:0;top:446.10px;width:978px;height:16.40px;background:#1f1f1f"></div>
<div class="a" style="left:0;top:462.45px;width:978px;height:16.40px;background:#292929"></div>
<div class="a" style="left:0;top:478.80px;width:978px;height:16.40px;background:#1b273b"></div>
<div class="a" style="left:3px;top:400.02px;width:7.8px;height:10.4px;background:#fafafa;border-radius:0.6px"></div>
<div class="t" style="left:14.90px;top:401.00px;font-size:9.0px;color:#ececec;-webkit-text-stroke:0.15px #ececec;">roles</div>
<div class="t" style="left:294.00px;top:401.00px;font-size:9.0px;color:#ececec;-webkit-text-stroke:0.15px #ececec;">200</div>
<div class="t" style="left:382.00px;top:401.00px;font-size:9.0px;color:#ececec;-webkit-text-stroke:0.15px #ececec;">xhr</div>
<div class="t" style="left:470.50px;top:401.00px;font-size:9.0px;color:#dcdcdc;text-decoration:underline;text-decoration-thickness:0.8px;text-underline-offset:1px-webkit-text-stroke:0.15px #dcdcdc;">xhr.js?b50d:177</div>
<div class="t" style="left:580.00px;top:401.00px;font-size:9.0px;color:#ececec;width:120.4px;text-align:right;-webkit-text-stroke:0.15px #ececec;">346 B</div>
<div class="t" style="left:668.00px;top:401.00px;font-size:9.0px;color:#ececec;width:120px;text-align:right;-webkit-text-stroke:0.15px #ececec;">15 毫秒</div>
<div class="t" style="left:794.40px;top:401.00px;font-size:9.0px;color:#ececec;-webkit-text-stroke:0.15px #ececec;">222889</div>
<div class="a" style="left:936.0px;top:399.92px;width:2px;height:9.2px;background:#2a93e8"></div>
<div class="a" style="left:3px;top:416.38px;width:7.8px;height:10.4px;background:#fafafa;border-radius:0.6px"></div>
<div class="t" style="left:14.90px;top:417.00px;font-size:9.0px;color:#ececec;-webkit-text-stroke:0.15px #ececec;">list</div>
<div class="t" style="left:294.00px;top:417.00px;font-size:9.0px;color:#ececec;-webkit-text-stroke:0.15px #ececec;">200</div>
<div class="t" style="left:382.00px;top:417.00px;font-size:9.0px;color:#ececec;-webkit-text-stroke:0.15px #ececec;">json</div>
<div class="t" style="left:470.50px;top:418.00px;font-size:9.0px;color:#c8c8c8;-webkit-text-stroke:0.15px #c8c8c8;">其他</div>
<div class="t" style="left:580.00px;top:417.00px;font-size:9.0px;color:#ececec;width:120.4px;text-align:right;-webkit-text-stroke:0.15px #ececec;">0 B</div>
<div class="t" style="left:668.00px;top:418.00px;font-size:9.0px;color:#ececec;width:120px;text-align:right;-webkit-text-stroke:0.15px #ececec;">6 毫秒</div>
<div class="t" style="left:794.40px;top:417.00px;font-size:9.0px;color:#ececec;-webkit-text-stroke:0.15px #ececec;">222889</div>
<div class="a" style="left:945.0px;top:416.27px;width:2px;height:9.2px;background:#2a93e8"></div>
<div class="a" style="left:3px;top:432.73px;width:7.8px;height:10.4px;background:#fafafa;border-radius:0.6px"></div>
<div class="t" style="left:14.90px;top:434.00px;font-size:9.0px;color:#ececec;-webkit-text-stroke:0.15px #ececec;">list</div>
<div class="t" style="left:294.00px;top:434.00px;font-size:9.0px;color:#ececec;-webkit-text-stroke:0.15px #ececec;">200</div>
<div class="t" style="left:382.00px;top:434.00px;font-size:9.0px;color:#ececec;-webkit-text-stroke:0.15px #ececec;">xhr</div>
<div class="t" style="left:470.50px;top:434.00px;font-size:9.0px;color:#dcdcdc;text-decoration:underline;text-decoration-thickness:0.8px;text-underline-offset:1px-webkit-text-stroke:0.15px #dcdcdc;">xhr.js?b50d:177</div>
<div class="t" style="left:580.00px;top:434.00px;font-size:9.0px;color:#ececec;width:120.4px;text-align:right;-webkit-text-stroke:0.15px #ececec;">345 B</div>
<div class="t" style="left:668.00px;top:434.00px;font-size:9.0px;color:#ececec;width:120px;text-align:right;-webkit-text-stroke:0.15px #ececec;">5 毫秒</div>
<div class="t" style="left:794.40px;top:434.00px;font-size:9.0px;color:#ececec;-webkit-text-stroke:0.15px #ececec;">222889</div>
<div class="a" style="left:945.0px;top:432.62px;width:2px;height:9.2px;background:#2a93e8"></div>
<div class="a" style="left:3px;top:449.07px;width:7.8px;height:10.4px;background:#fafafa;border-radius:0.6px"></div>
<div class="t" style="left:14.90px;top:450.00px;font-size:9.0px;color:#ececec;-webkit-text-stroke:0.15px #ececec;">roles</div>
<div class="t" style="left:294.00px;top:450.00px;font-size:9.0px;color:#ececec;-webkit-text-stroke:0.15px #ececec;">200</div>
<div class="t" style="left:382.00px;top:450.00px;font-size:9.0px;color:#ececec;-webkit-text-stroke:0.15px #ececec;">xhr</div>
<div class="t" style="left:470.50px;top:450.00px;font-size:9.0px;color:#dcdcdc;text-decoration:underline;text-decoration-thickness:0.8px;text-underline-offset:1px-webkit-text-stroke:0.15px #dcdcdc;">xhr.js?b50d:177</div>
<div class="t" style="left:580.00px;top:450.00px;font-size:9.0px;color:#ececec;width:120.4px;text-align:right;-webkit-text-stroke:0.15px #ececec;">346 B</div>
<div class="t" style="left:668.00px;top:450.00px;font-size:9.0px;color:#ececec;width:120px;text-align:right;-webkit-text-stroke:0.15px #ececec;">11 毫秒</div>
<div class="t" style="left:794.40px;top:450.00px;font-size:9.0px;color:#ececec;-webkit-text-stroke:0.15px #ececec;">222908</div>
<div class="a" style="left:954.0px;top:448.97px;width:2px;height:9.2px;background:#2a93e8"></div>
<div class="a" style="left:3px;top:465.43px;width:7.8px;height:10.4px;background:#fafafa;border-radius:0.6px"></div>
<div class="t" style="left:14.90px;top:466.00px;font-size:9.0px;color:#ececec;-webkit-text-stroke:0.15px #ececec;">list</div>
<div class="t" style="left:294.00px;top:466.00px;font-size:9.0px;color:#ececec;-webkit-text-stroke:0.15px #ececec;">200</div>
<div class="t" style="left:382.00px;top:466.00px;font-size:9.0px;color:#ececec;-webkit-text-stroke:0.15px #ececec;">xhr</div>
<div class="t" style="left:470.50px;top:466.00px;font-size:9.0px;color:#dcdcdc;text-decoration:underline;text-decoration-thickness:0.8px;text-underline-offset:1px-webkit-text-stroke:0.15px #dcdcdc;">xhr.js?b50d:177</div>
<div class="t" style="left:580.00px;top:466.00px;font-size:9.0px;color:#ececec;width:120.4px;text-align:right;-webkit-text-stroke:0.15px #ececec;">345 B</div>
<div class="t" style="left:668.00px;top:467.00px;font-size:9.0px;color:#ececec;width:120px;text-align:right;-webkit-text-stroke:0.15px #ececec;">7 毫秒</div>
<div class="t" style="left:794.40px;top:466.00px;font-size:9.0px;color:#ececec;-webkit-text-stroke:0.15px #ececec;">222908</div>
<div class="a" style="left:960.4px;top:465.32px;width:2px;height:9.2px;background:#2a93e8"></div>
<div class="a" style="left:3px;top:481.77px;width:7.8px;height:10.4px;background:#fafafa;border-radius:0.6px"></div>
<div class="t" style="left:14.90px;top:483.00px;font-size:9.0px;color:#ececec;-webkit-text-stroke:0.15px #ececec;">roles</div>
<div class="t" style="left:294.00px;top:483.00px;font-size:9.0px;color:#ececec;-webkit-text-stroke:0.15px #ececec;">200</div>
<div class="t" style="left:382.00px;top:483.00px;font-size:9.0px;color:#ececec;-webkit-text-stroke:0.15px #ececec;">xhr</div>
<div class="t" style="left:470.50px;top:483.00px;font-size:9.0px;color:#dcdcdc;text-decoration:underline;text-decoration-thickness:0.8px;text-underline-offset:1px-webkit-text-stroke:0.15px #dcdcdc;">xhr.js?b50d:177</div>
<div class="t" style="left:580.00px;top:483.00px;font-size:9.0px;color:#ececec;width:120.4px;text-align:right;-webkit-text-stroke:0.15px #ececec;">346 B</div>
<div class="t" style="left:668.00px;top:483.00px;font-size:9.0px;color:#ececec;width:120px;text-align:right;-webkit-text-stroke:0.15px #ececec;">9 毫秒</div>
<div class="t" style="left:794.40px;top:483.00px;font-size:9.0px;color:#ececec;-webkit-text-stroke:0.15px #ececec;">222908</div>
<div class="a" style="left:966.4px;top:481.67px;width:2px;height:9.2px;background:#2a93e8"></div>
<div class="a" style="left:0;top:385.4px;width:978px;height:19.8px;background:#292929"></div>
<div class="a" style="left:0;top:405.2px;width:978px;height:0.8px;background:#3d3d3d"></div>
<div class="t" style="left:0.00px;top:392.00px;font-size:9.2px;color:#e6e6e6;-webkit-text-stroke:0.15px #e6e6e6;">名称</div>
<div class="t" style="left:294.00px;top:392.00px;font-size:9.2px;color:#e6e6e6;-webkit-text-stroke:0.15px #e6e6e6;">状态</div>
<div class="t" style="left:382.00px;top:392.00px;font-size:9.2px;color:#e6e6e6;-webkit-text-stroke:0.15px #e6e6e6;">类型</div>
<div class="t" style="left:470.00px;top:392.00px;font-size:9.2px;color:#e6e6e6;-webkit-text-stroke:0.15px #e6e6e6;">发起程序</div>
<div class="t" style="left:616.30px;top:392.00px;font-size:9.2px;color:#e6e6e6;-webkit-text-stroke:0.15px #e6e6e6;">大小</div>
<div class="t" style="left:706.80px;top:392.00px;font-size:9.2px;color:#e6e6e6;-webkit-text-stroke:0.15px #e6e6e6;">时间</div>
<div class="t" style="left:794.40px;top:392.00px;font-size:9.2px;color:#e6e6e6;-webkit-text-stroke:0.15px #e6e6e6;">连接 ID</div>
<div class="t" style="left:879.60px;top:392.00px;font-size:9.2px;color:#e6e6e6;-webkit-text-stroke:0.15px #e6e6e6;">瀑布</div>
<svg class="a" style="left:960px;top:390px" width="16" height="12"><path d="M4.4 8.8L8.4 3.6L12.4 8.8Z" fill="#9a9a9a"/></svg>
<div class="a" style="left:291px;top:385.4px;width:1px;height:110px;background:#3a3a3a"></div>
<div class="a" style="left:379px;top:385.4px;width:1px;height:110px;background:#3a3a3a"></div>
<div class="a" style="left:467px;top:385.4px;width:1px;height:110px;background:#3a3a3a"></div>
<div class="a" style="left:613px;top:385.4px;width:1px;height:110px;background:#3a3a3a"></div>
<div class="a" style="left:703px;top:385.4px;width:1px;height:110px;background:#3a3a3a"></div>
<div class="a" style="left:791px;top:385.4px;width:1px;height:110px;background:#3a3a3a"></div>
<div class="a" style="left:876px;top:385.4px;width:1px;height:110px;background:#3a3a3a"></div>
<div class="a" style="left:894.6px;top:405px;width:1.2px;height:90px;background:#b5453a"></div>
<div class="a" style="left:961px;top:405px;width:0.8px;height:90px;background:#333"></div>
<div class="a" style="left:968.4px;top:470px;width:9.6px;height:24.6px;background:#575757"></div>
<div class="a" style="left:0;top:494.8px;width:978px;height:5.2px;background:#242424"></div>
<div class="a" style="left:0;top:494.8px;width:978px;height:0.8px;background:#3d3d3d"></div>
<svg class="a" style="left:880px;top:492px" width="12" height="10"><path d="M1.6 1L1.6 9L3.6 7L5.5 9.5L8 7Z" fill="#f5b50a" stroke="#b07800" stroke-width="0.4"/></svg>
</body></html>
